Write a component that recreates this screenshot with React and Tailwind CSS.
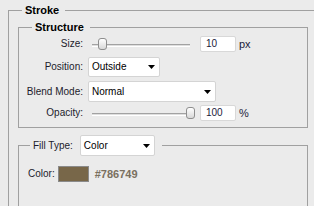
import React from 'react';

const Arrow = () => (
  <svg width="7" height="4" viewBox="0 0 7 4" className="shrink-0">
    <path d="M0 0h7L3.5 4z" fill="#000" />
  </svg>
);

const Slider = ({ thumb }) => (
  <div className="relative flex h-[16px] w-[98px] items-center">
    <div className="mt-[2px] h-[3px] w-full border-t border-b border-t-[#a2a2a2] border-b-white bg-[#dedede]" />
    <div className={`absolute top-[2px] h-[12px] w-[9px] rounded-[3px] border border-[#8e8e8e] bg-gradient-to-b from-white to-[#d8d8d8] ${thumb}`} />
  </div>
);

const NumBox = ({ value }) => (
  <div className="ml-[10px] flex h-[16px] w-[36px] items-center rounded-[2px] border border-[#d8d8d8] bg-white pl-[5px] text-[#1b1b3a]">
    {value}
  </div>
);

const Select = ({ value, width, height }) => (
  <div className={`flex items-center justify-between rounded-[2px] border border-[#d4d4d4] bg-white pl-[3px] pr-[4px] text-black ${width} ${height}`}>
    <span>{value}</span>
    <Arrow />
  </div>
);

export default function App() {
  return (
    <div
      className="h-[206px] w-[314px] overflow-hidden bg-[#ebebeb] text-[10px] leading-[12px] text-[#1c1c2c]"
      style={{ fontFamily: '"Liberation Sans", Arial, sans-serif' }}
    >
      <fieldset className="ml-[8px] mt-[4px] h-[260px] w-[340px] border border-[#a0a0a0]">
        <legend className="ml-[13px] pl-[3px] pr-[6px] text-[11px] font-bold leading-[13px] text-black">Stroke</legend>

        <fieldset className="ml-[9px] mt-[4px] w-[290px] border border-[#a0a0a0] pb-[6px]">
          <legend className="ml-[13px] pl-[3px] pr-[6px] text-[11px] font-bold leading-[13px] text-black">Structure</legend>

          <div className="mt-[2px] flex h-[16px] items-center">
            <span className="w-[64px] text-right">Size:</span>
            <div className="ml-[9px]">
              <Slider thumb="left-[6px]" />
            </div>
            <NumBox value="10" />
            <span className="ml-[3px] text-[11px] text-[#1b1b3a]">px</span>
          </div>

          <div className="mt-[5px] flex h-[20px] items-center">
            <span className="w-[64px] text-right">Position:</span>
            <div className="ml-[5px]">
              <Select value="Outside" width="w-[72px]" height="h-[20px]" />
            </div>
          </div>

          <div className="mt-[4px] flex h-[21px] items-center">
            <span className="w-[64px] text-right">Blend Mode:</span>
            <div className="ml-[5px]">
              <Select value="Normal" width="w-[128px]" height="h-[21px]" />
            </div>
          </div>

          <div className="mt-[3px] flex h-[16px] items-center">
            <span className="w-[64px] text-right">Opacity:</span>
            <div className="ml-[9px]">
              <Slider thumb="left-[94px]" />
            </div>
            <NumBox value="100" />
            <span className="ml-[3px] text-[11px] text-[#1b1b3a]">%</span>
          </div>
        </fieldset>

        <fieldset className="ml-[9px] mt-[7px] h-[120px] w-[290px] border border-[#a0a0a0]">
          <legend className="ml-[11px] pl-[3px] pr-[7px]">
            <div className="flex items-center">
              <span>Fill Type:</span>
              <div className="ml-[7px]">
                <Select value="Color" width="w-[75px]" height="h-[21px]" />
              </div>
            </div>
          </legend>

          <div className="mt-[10px] flex items-center pl-[9px]">
            <span>Color:</span>
            <div className="ml-[3px] h-[16px] w-[31px] border border-[#8a8a8a] bg-[#786749]" />
            <span className="ml-[6px] text-[11px] font-bold text-[#7a705f]">#786749</span>
          </div>
        </fieldset>
      </fieldset>
    </div>
  );
}
